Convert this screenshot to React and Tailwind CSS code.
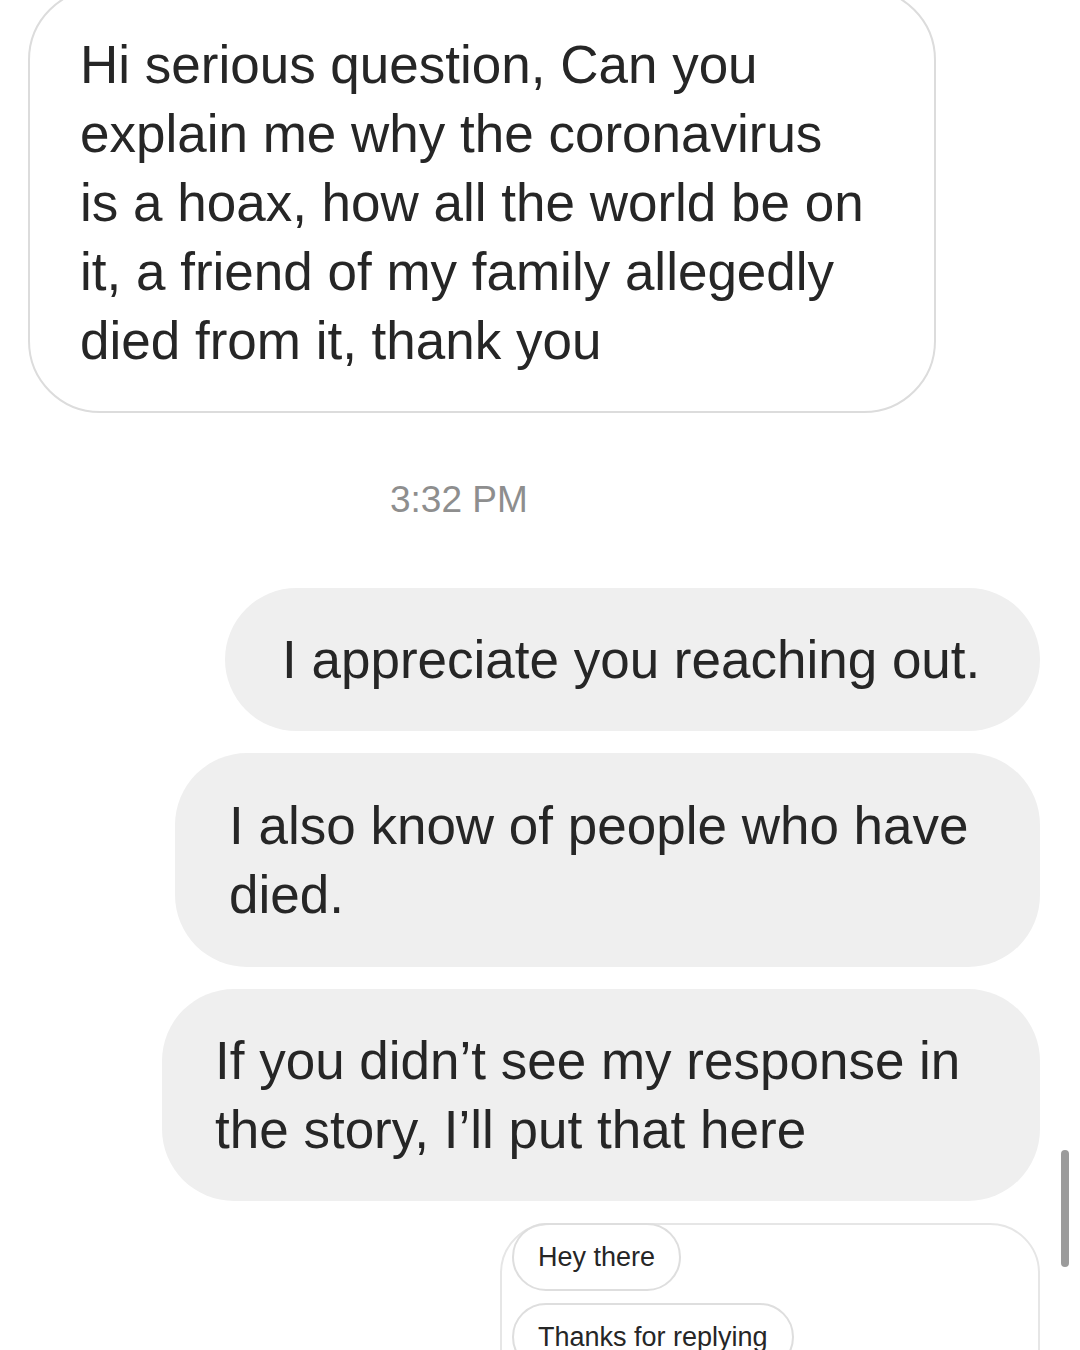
export default function App() {
  return (
    <div
      className="relative w-[1080px] h-[1350px] overflow-hidden bg-white text-[#262626]"
      style={{ fontFamily: '"Liberation Sans", Arial, sans-serif' }}
    >
      <div className="flex flex-col">
        {/* incoming message */}
        <div className="ml-[28px] mt-[-12px] w-[908px] rounded-[72px] border-2 border-[#dcdcdc] pl-[50px] pt-[40px] pb-[36px] text-[53px] leading-[69px]">
          Hi serious question, Can you
          <br />
          explain me why the coronavirus
          <br />
          is a hoax, how all the world be on
          <br />
          it, a friend of my family allegedly
          <br />
          died from it, thank you
        </div>

        <div className="ml-[390px] mt-[65px] text-[37px] leading-[44px] text-[#8e8e8e]">3:32 PM</div>

        {/* outgoing messages */}
        <div className="self-end mr-[40px] mt-[66px] w-[815px] rounded-[72px] bg-[#efefef] pl-[57px] py-[37px] text-[53px] leading-[69px]">
          I appreciate you reaching out.
        </div>
        <div className="self-end mr-[40px] mt-[22px] w-[865px] rounded-[72px] bg-[#efefef] pl-[54px] py-[38px] text-[53px] leading-[69px]">
          I also know of people who have
          <br />
          died.
        </div>
        <div className="self-end mr-[40px] mt-[22px] w-[878px] rounded-[72px] bg-[#efefef] pl-[53px] py-[37px] text-[53px] leading-[69px]">
          If you didn’t see my response in
          <br />
          the story, I’ll put that here
        </div>

        {/* quick replies */}
        <div className="ml-[500px] mt-[22px] w-[540px] h-[220px] rounded-[50px] border-2 border-[#e6e6e6] pl-[10px] flex flex-col items-start gap-[12px]">
          <div className="h-[68px] px-[24px] rounded-full border-2 border-[#dedede] flex items-center text-[27px] mt-[-2px]">
            Hey there
          </div>
          <div className="h-[68px] px-[24px] rounded-full border-2 border-[#dedede] flex items-center text-[27px]">
            Thanks for replying
          </div>
        </div>
      </div>

      {/* scroll indicator */}
      <div className="absolute left-[1061px] top-[1150px] w-[8px] h-[117px] rounded-full bg-[#9b9b9b]" />
    </div>
  );
}
